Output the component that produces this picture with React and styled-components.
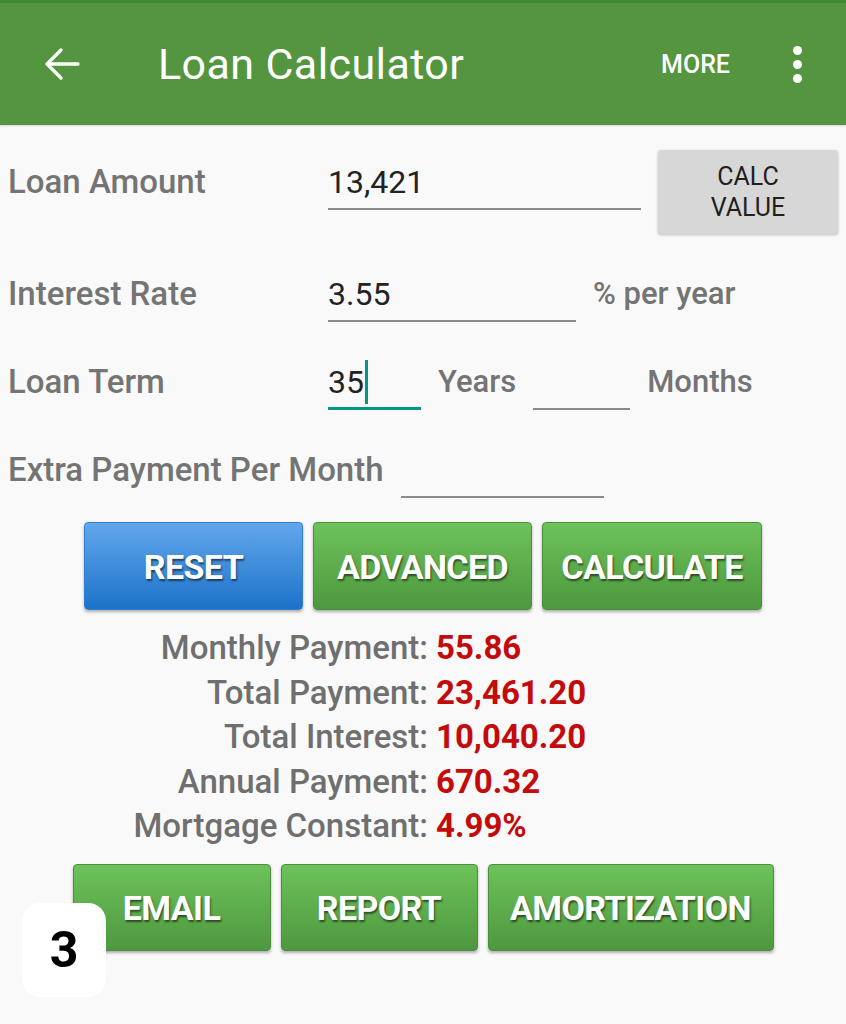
import { createGlobalStyle, styled } from 'styled-components';

const GlobalStyle = createGlobalStyle`
  html, body {
    margin: 0;
    padding: 0;
    background: #f9f9f9;
  }
  body {
    font-family: Roboto, "Liberation Sans", sans-serif;
  }
`;

const Screen = styled.div`
  position: relative;
  width: 846px;
  height: 1024px;
  overflow: hidden;
  background: #f9f9f9;
`;

const AppBar = styled.header`
  height: 122px;
  border-top: 3px solid #3f8a36;
  background: #55953f;
  display: flex;
  align-items: center;
  padding: 0 0 0 44px;
  box-shadow: 0 1px 2px rgba(0, 0, 0, 0.15);
`;

const BackButton = styled.div`
  width: 38px;
  height: 40px;
  display: flex;
  align-items: center;
`;

const Title = styled.h1`
  margin: 0 0 0 76px;
  flex: 1;
  color: #fff;
  font-size: 43px;
  font-weight: 400;
  letter-spacing: 0.4px;
`;

const MoreText = styled.span`
  color: #fff;
  font-size: 25px;
  font-weight: 500;
  margin-right: 63px;
`;

const Dots = styled.div`
  display: flex;
  flex-direction: column;
  gap: 5px;
  margin-right: 44px;

  span {
    width: 9px;
    height: 9px;
    border-radius: 50%;
    background: #fff;
  }
`;

const Form = styled.div`
  display: flex;
  flex-direction: column;
  gap: 34px;
  padding-top: 25px;
`;

const Row = styled.div`
  display: flex;
  align-items: ${(p) => (p.$top ? 'flex-start' : 'center')};
`;

const Label = styled.div`
  box-sizing: border-box;
  width: ${(p) => (p.$w ? `${p.$w}px` : 'auto')};
  padding-left: ${(p) => (p.$pl ?? 8)}px;
  margin-top: ${(p) => p.$mt || 0}px;
  margin-left: ${(p) => p.$ml || 0}px;
  height: 54px;
  line-height: 52px;
  color: #747474;
  font-size: ${(p) => p.$size || 33}px;
  font-weight: 500;
  white-space: nowrap;
`;

const Field = styled.div`
  box-sizing: border-box;
  width: ${(p) => p.$w}px;
  height: 54px;
  margin-top: ${(p) => p.$mt || 0}px;
  margin-left: ${(p) => p.$ml || 0}px;
  border-bottom: ${(p) => (p.$focus ? '3px solid #00968a' : '2px solid #8a8a8a')};
  line-height: 52px;
  color: #222;
  font-size: 32px;
  display: flex;
  align-items: center;
`;

const Cursor = styled.span`
  display: inline-block;
  width: 3px;
  height: 44px;
  background: #00968a;
  margin-left: 1px;
`;

const CalcValueButton = styled.div`
  margin-left: 17px;
  width: 180px;
  height: 84px;
  border-radius: 3px;
  background: #d7d7d7;
  box-shadow: 0 1px 3px rgba(0, 0, 0, 0.25);
  display: flex;
  align-items: center;
  justify-content: center;
  text-align: center;
  color: #1f1f1f;
  font-size: 25px;
  line-height: 31px;
  font-weight: 400;
`;

const ButtonRow = styled.div`
  display: flex;
  justify-content: center;
  gap: 10px;
  margin-top: ${(p) => p.$mt}px;
`;

const ActionButton = styled.div`
  box-sizing: border-box;
  width: ${(p) => p.$w}px;
  height: ${(p) => p.$h}px;
  border-radius: 4px;
  border: 1px solid ${(p) => (p.$blue ? '#2f7fcf' : '#4b8f3d')};
  background: ${(p) =>
    p.$blue
      ? 'linear-gradient(#63a7ec, #1c72c9)'
      : 'linear-gradient(#6dc25a, #4e983f)'};
  box-shadow: 0 2px 3px rgba(0, 0, 0, 0.3);
  display: flex;
  align-items: center;
  justify-content: center;
  padding-top: 2px;
  color: #fff;
  font-size: 34px;
  font-weight: 700;
  letter-spacing: -0.6px;
  text-shadow: 1px 2px 2px rgba(0, 0, 0, 0.55);
`;

const Results = styled.div`
  display: grid;
  grid-template-columns: 428px auto;
  column-gap: 8px;
  margin-top: 16px;
  font-size: 33px;
  line-height: 44.5px;
  font-weight: 500;
`;

const ResultLabel = styled.div`
  text-align: right;
  color: #6f6f6f;
  white-space: nowrap;
`;

const ResultValue = styled.div`
  color: #c40b0b;
  font-weight: 700;
`;

const Badge = styled.div`
  position: absolute;
  left: 22px;
  top: 903px;
  width: 84px;
  height: 94px;
  border-radius: 18px;
  background: #fff;
  display: flex;
  align-items: center;
  justify-content: center;
  color: #000;
  font-size: 50px;
  font-weight: 700;
`;

const results = [
  ['Monthly Payment:', '55.86'],
  ['Total Payment:', '23,461.20'],
  ['Total Interest:', '10,040.20'],
  ['Annual Payment:', '670.32'],
  ['Mortgage Constant:', '4.99%'],
];

export default function App() {
  return (
    <Screen>
      <GlobalStyle />
      <AppBar>
        <BackButton>
          <svg width="36" height="34" viewBox="0 0 36 34" fill="none">
            <path
              d="M34 17H3M17 3L3 17l14 14"
              stroke="#fff"
              strokeWidth="3.3"
              strokeLinecap="round"
              strokeLinejoin="round"
            />
          </svg>
        </BackButton>
        <Title>Loan Calculator</Title>
        <MoreText>MORE</MoreText>
        <Dots>
          <span />
          <span />
          <span />
        </Dots>
      </AppBar>

      <Form>
        <Row $top>
          <Label $w={328} $mt={6}>Loan Amount</Label>
          <Field $w={313} $mt={6}>13,421</Field>
          <CalcValueButton>
            CALC
            <br />
            VALUE
          </CalcValueButton>
        </Row>
        <Row>
          <Label $w={328}>Interest Rate</Label>
          <Field $w={248}>3.55</Field>
          <Label $pl={0} $ml={17} $size={31}>% per year</Label>
        </Row>
        <Row>
          <Label $w={328}>Loan Term</Label>
          <Field $w={93} $focus>
            35
            <Cursor />
          </Field>
          <Label $pl={0} $ml={17} $size={31}>Years</Label>
          <Field $w={97} $ml={17} />
          <Label $pl={0} $ml={17} $size={31}>Months</Label>
        </Row>
        <Row>
          <Label>Extra Payment Per Month</Label>
          <Field $w={203} $ml={17} />
        </Row>
      </Form>

      <ButtonRow $mt={24}>
        <ActionButton $blue $w={219} $h={88}>RESET</ActionButton>
        <ActionButton $w={219} $h={88}>ADVANCED</ActionButton>
        <ActionButton $w={220} $h={88}>CALCULATE</ActionButton>
      </ButtonRow>

      <Results>
        {results.map(([label, value]) => (
          <>
            <ResultLabel key={label}>{label}</ResultLabel>
            <ResultValue key={value}>{value}</ResultValue>
          </>
        ))}
      </Results>

      <ButtonRow $mt={15}>
        <ActionButton $w={198} $h={87}>EMAIL</ActionButton>
        <ActionButton $w={197} $h={87}>REPORT</ActionButton>
        <ActionButton $w={286} $h={87}>AMORTIZATION</ActionButton>
      </ButtonRow>

      <Badge>3</Badge>
    </Screen>
  );
}
